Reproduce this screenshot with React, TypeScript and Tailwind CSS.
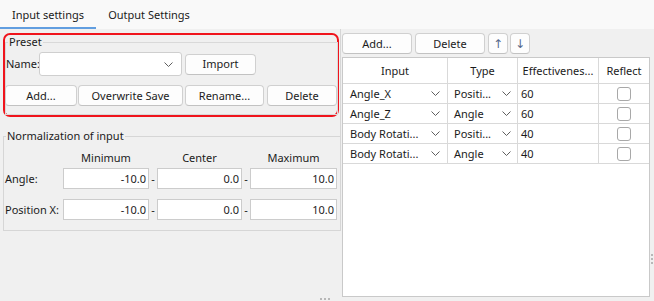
import type { ReactNode } from 'react'

const rows = [
  { input: 'Angle_X', type: 'Positi...', eff: '60' },
  { input: 'Angle_Z', type: 'Angle', eff: '60' },
  { input: 'Body Rotati...', type: 'Positi...', eff: '40' },
  { input: 'Body Rotati...', type: 'Angle', eff: '40' },
]

const norm = [
  { label: 'Angle:', min: '-10.0', center: '0.0', max: '10.0' },
  { label: 'Position X:', min: '-10.0', center: '0.0', max: '10.0' },
]

function Chevron() {
  return (
    <svg width="9" height="5" viewBox="0 0 9 5" className="shrink-0">
      <path d="M0.5 0.5 L4.5 4.5 L8.5 0.5" fill="none" stroke="#5f5f5f" strokeWidth="1" />
    </svg>
  )
}

function Btn({ className, children }: { className: string; children: ReactNode }) {
  return (
    <div
      className={
        'flex h-[21px] items-center justify-center rounded-[4px] border border-[#d0d0d0] border-b-[#c2c2c2] bg-[#fdfdfd] ' +
        className
      }
    >
      {children}
    </div>
  )
}

function NumBox({ value }: { value: string }) {
  return (
    <div className="flex h-[21px] items-center justify-end border border-[#cccccc] bg-white pr-[2px]">
      {value}
    </div>
  )
}

export default function App() {
  return (
    <div className="relative h-[301px] w-[654px] overflow-hidden whitespace-nowrap bg-[#f0f0f0] font-['Noto_Sans',sans-serif] text-[11px] leading-[16px] text-[#1b1b1b]">
      {/* tabs */}
      <div className="flex h-[29px] bg-[#f9f9f9]">
        <div className="flex w-[96px] items-center justify-center border-b-[2px] border-[#619ee0] pt-[2px]">
          Input settings
        </div>
        <div className="flex w-[106px] items-center justify-center">Output Settings</div>
      </div>

      <div className="flex">
        {/* left side */}
        <div className="h-[202px] w-[341px] border-r border-[#d6d6d6] pl-[3px] pt-[4px]">
          <div className="w-[336px] rounded-[7px] border-2 border-[#f0141c]">
            <fieldset className="border border-[#d9d9d9] pb-[8px]">
              <legend className="ml-[2px] px-[1px] leading-[14px]">Preset</legend>
              <div className="mt-[3px] flex items-center">
                <div className="w-[33px]">Name:</div>
                <div className="flex h-[24px] w-[143px] items-center justify-end rounded-[3px] border border-[#cfcfcf] bg-white pr-[8px]">
                  <Chevron />
                </div>
                <Btn className="ml-[3px] w-[71px]">Import</Btn>
              </div>
              <div className="-ml-[1px] mt-[9px] flex">
                <Btn className="w-[72px]">Add...</Btn>
                <Btn className="ml-[1px] w-[105px]">Overwrite Save</Btn>
                <Btn className="ml-[2px] w-[79px]">Rename...</Btn>
                <Btn className="ml-[3px] w-[70px]">Delete</Btn>
              </div>
            </fieldset>
          </div>

          <fieldset className="mt-[12px] w-[337px] border border-r-0 border-[#d6d6d6] pb-[10px]">
            <legend className="ml-[2px] px-[1px] leading-[14px]">Normalization of input</legend>
            <div className="mt-[7px] grid grid-cols-[59px_86px_8px_85px_8px_87px] items-center">
              <div />
              <div className="text-center">Minimum</div>
              <div />
              <div className="text-center">Center</div>
              <div />
              <div className="text-center">Maximum</div>
            </div>
            {norm.map((r, i) => (
              <div
                key={r.label}
                className={
                  'grid grid-cols-[59px_86px_8px_85px_8px_87px] items-center ' + (i === 0 ? 'mt-[2px]' : 'mt-[10px]')
                }
              >
                <div className="pl-[1px]">{r.label}</div>
                <NumBox value={r.min} />
                <div className="text-center">-</div>
                <NumBox value={r.center} />
                <div className="text-center">-</div>
                <NumBox value={r.max} />
              </div>
            ))}
          </fieldset>
        </div>

        {/* right side */}
        <div className="pl-[1px] pt-[4px]">
          <div className="flex">
            <Btn className="w-[70px]">Add...</Btn>
            <Btn className="ml-[3px] w-[70px]">Delete</Btn>
            <Btn className="ml-[3px] w-[20px] font-['DejaVu_Sans',sans-serif] text-[12px] text-[#55688a]">↑</Btn>
            <Btn className="ml-[2px] w-[20px] font-['DejaVu_Sans',sans-serif] text-[12px] text-[#55688a]">↓</Btn>
          </div>
          <div className="mt-[3px] h-[240px] w-[308px] border border-[#c9c9c9] bg-white">
            <div className="grid h-[26px] grid-cols-[105px_70px_81px_1fr] border-b border-[#d9d9d9]">
              <div className="flex items-center justify-center border-r border-[#d9d9d9]">Input</div>
              <div className="flex items-center justify-center border-r border-[#d9d9d9]">Type</div>
              <div className="flex items-center justify-center border-r border-[#d9d9d9]">Effectivenes...</div>
              <div className="flex items-center justify-center">Reflect</div>
            </div>
            {rows.map((r, i) => (
              <div key={i} className="grid h-[20px] grid-cols-[105px_70px_81px_1fr] border-b border-[#d9d9d9]">
                <div className="flex items-center justify-between border-r border-[#d9d9d9] pl-[7px] pr-[7px]">
                  <span>{r.input}</span>
                  <Chevron />
                </div>
                <div className="flex items-center justify-between border-r border-[#d9d9d9] pl-[6px] pr-[6px]">
                  <span>{r.type}</span>
                  <Chevron />
                </div>
                <div className="flex items-center border-r border-[#d9d9d9] pl-[3px]">{r.eff}</div>
                <div className="flex items-center justify-center">
                  <div className="h-[14px] w-[14px] rounded-[3px] border border-[#a8a8a8] bg-white" />
                </div>
              </div>
            ))}
          </div>
        </div>
      </div>

      {/* splitter grips */}
      <div className="absolute left-[320px] top-[298px] flex gap-[2px]">
        <div className="h-[2px] w-[2px] bg-[#b8b8b8]" />
        <div className="h-[2px] w-[2px] bg-[#b8b8b8]" />
        <div className="h-[2px] w-[2px] bg-[#b8b8b8]" />
      </div>
      <div className="absolute left-[651px] top-[254px] flex flex-col gap-[2px]">
        <div className="h-[2px] w-[2px] bg-[#b8b8b8]" />
        <div className="h-[2px] w-[2px] bg-[#b8b8b8]" />
        <div className="h-[2px] w-[2px] bg-[#b8b8b8]" />
      </div>
    </div>
  )
}
